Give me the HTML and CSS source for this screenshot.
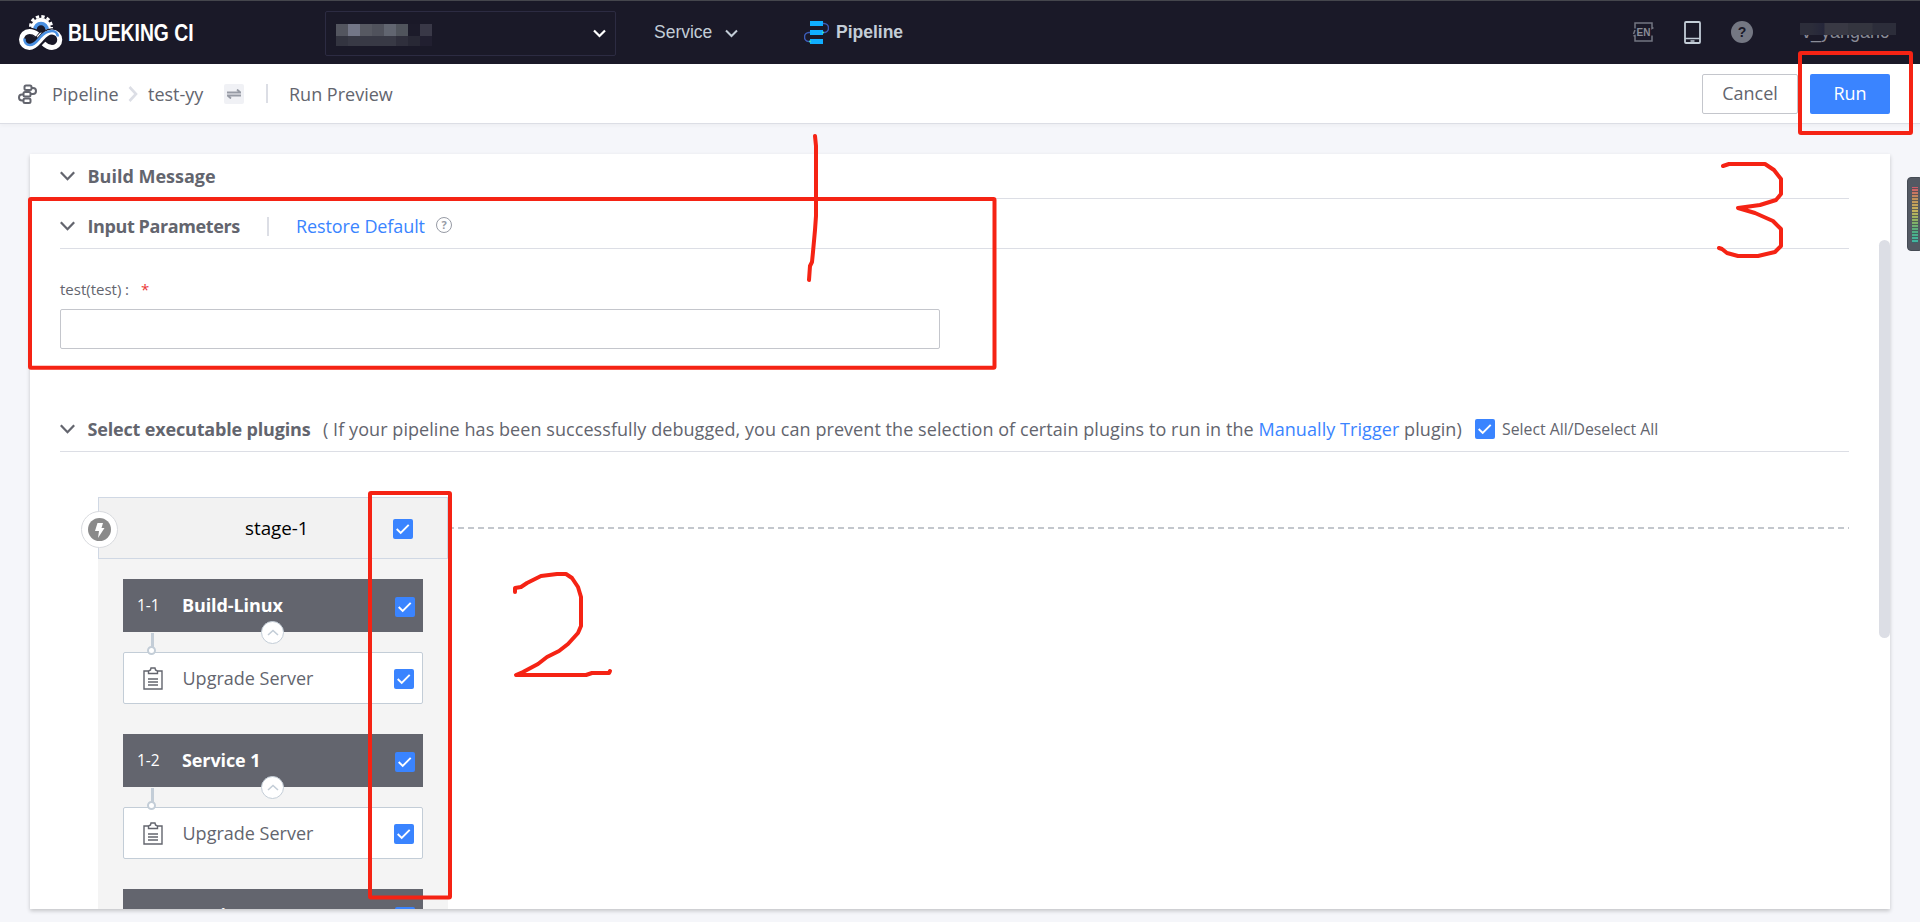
FILE: index.html
```html
<!DOCTYPE html>
<html lang="en">
<head>
<meta charset="utf-8">
<title>Run Preview</title>
<link rel="stylesheet" href="styles.css">
</head>
<body>
<svg class="defs" width="0" height="0">
  <symbol id="check" viewBox="0 0 20 20"><rect width="20" height="20" rx="2" fill="#3a84ff"/><path d="M3.700 10l4 4 8-8.200" fill="none" stroke="#fff" stroke-width="1.900"/></symbol>
  <symbol id="chevron" viewBox="0 0 15 10"><path d="M.8 1.200l6.700 7 6.700-7" fill="none" stroke="currentColor" stroke-width="2.300"/></symbol>
  <symbol id="clip" viewBox="0 0 20 23"><path d="M5 4H1v18h18V4h-4M5.500 6.500V4l2-1L8 1h4l.5 2 2 1v2.500z" fill="none" stroke="#63656e" stroke-width="1.400"/><path d="M5 12h10M5 15h10M5 18h10" stroke="#63656e" stroke-width="1.400"/></symbol>
</svg>
<header class="topbar">
  <div class="brand">
    <svg width="44" height="36" viewBox="0 0 44 36">
      <circle cx="22" cy="12" r="10.500" fill="none" stroke="#fff" stroke-width="3" stroke-dasharray="3.300 2.200"/>
      <circle cx="22" cy="12.500" r="7.500" fill="none" stroke="#fff" stroke-width="4.500"/>
      <path d="M16 14.500a6 6 0 0 1 12 0" fill="none" stroke="#4a90e2" stroke-width="3.600"/>
      <path d="M19 20c-2.500-2.500-5-3.500-8.500-3.500a8 8 0 0 0 0 16c5 0 7.500-3.800 10.800-7.500 3.200-3.700 6-8 11.700-8a7.700 7.700 0 0 1 0 15.500c-3 0-6-1.500-8.500-4" fill="none" stroke="#1a1928" stroke-width="7.500"/>
      <path d="M18.500 19.500c-2.500-2-5-3-8-3a8 8 0 0 0 0 16c5 0 7.500-3.800 10.800-7.500 3.200-3.700 6-8 11.700-8a7.700 7.700 0 0 1 0 15.500c-3 0-6-1.500-8.500-4" fill="none" stroke="#fff" stroke-width="5"/>
      <path d="M5.500 23.500c-.5 4 2 6.500 5.500 6.500 4.500 0 7-4 10-7.500s6.500-6.500 12-6.500c3 0 5.500 2 5.800 5.500" fill="none" stroke="#4a90e2" stroke-width="2.600"/>
    </svg>
    <span class="brand-name"><span class="t-brand">BLUEKING CI</span></span>
  </div>
  <div class="project">
    <div class="mosaic">
      <i class="m1"></i><i class="m2"></i><i class="m3"></i><i class="m4"></i><i class="m5"></i><i class="m6"></i><i class="m7"></i><i class="m8"></i>
      <i class="n1"></i><i class="n2"></i><i class="n2"></i><i class="n2"></i><i class="n2"></i><i class="n3"></i><i class="n4"></i><i class="n5"></i>
    </div>
    <svg width="13" height="9" viewBox="0 0 13 9"><path d="M1 1.500l5.500 5.500L12 1.500" fill="none" stroke="#fff" stroke-width="2.200"/></svg>
  </div>
  <div class="service"><span>Service</span><svg width="13" height="9" viewBox="0 0 13 9"><path d="M1 1.500l5.500 5.500L12 1.500" fill="none" stroke="#c3cdd7" stroke-width="2"/></svg></div>
  <div class="current">
    <svg width="25" height="25" viewBox="0 0 25 25"><path d="M18 3.500h2a4.200 4.200 0 0 1 0 9h-2M7 12.500H5a4.200 4.200 0 0 0 0 9h2" fill="none" stroke="#3b5cb8" stroke-width="1.500"/><path d="M6 1h13v5H6zM6 10h13v5H6zM6 19h13v5H6z" fill="#10aeff"/><circle cx="19" cy="12.500" r="1" fill="#42e6b5"/><circle cx="6" cy="21.500" r="1" fill="#42e6b5"/></svg>
    <span>Pipeline</span>
  </div>
  <div class="tools">
    <svg width="22" height="20" viewBox="0 0 22 20"><path d="M3 6.500V1h17v5.500l1.500-.8M20 13.500V19H3v-5.500l-1.500.5M1.500 12L3 8" fill="none" stroke="#737581" stroke-width="1.500"/><text x="11.500" y="13.800" text-anchor="middle" class="en">EN</text></svg>
    <svg class="phone" width="17" height="23" viewBox="0 0 17 23"><rect x="1" y="1" width="15" height="21" rx="1" fill="none" stroke="#c3cdd7" stroke-width="1.800"/><path d="M1 17.500h15M6.500 20h4" stroke="#c3cdd7" stroke-width="1.500"/></svg>
    <span class="help">?</span>
    <div class="user"><span>v_yangaric</span><b></b></div>
  </div>
</header>
<nav class="crumbs">
  <svg width="19" height="20" viewBox="0 0 19 20"><g fill="none" stroke="#63656e" stroke-width="2"><rect x="6.500" y="1.500" width="7" height="4.500" rx="1.500"/><rect x="5.500" y="8" width="7" height="4.500" rx="1.500"/><rect x="5.500" y="14.500" width="7" height="4.500" rx="1.500"/><path d="M13.500 4h1.500a3 3 0 0 1 0 6h-2.500M5.500 10.500H4a3 3 0 0 0 0 6h1.500"/></g></svg>
  <span class="c1">Pipeline</span>
  <svg class="sep" width="10" height="16" viewBox="0 0 10 16"><path d="M1.500 1l6.500 7-6.500 7" fill="none" stroke="#dcdee5" stroke-width="2.600"/></svg>
  <span class="c2">test-yy</span>
  <span class="swap"><svg width="14" height="10" viewBox="0 0 14 10"><path d="M0 3.500h13.500L10 .5M14 6.500H.5L4 9.500" fill="none" stroke="#979ba5" stroke-width="1.800"/></svg></span>
  <i class="bar"></i>
  <span class="c3">Run Preview</span>
  <div class="actions"><button class="cancel">Cancel</button><button class="run">Run</button></div>
</nav>
<main class="panel">
  <section class="head h-build"><svg class="chev"><use href="#chevron"/></svg><h2 class="t-build">Build Message</h2></section>
  <section class="head h-input"><svg class="chev"><use href="#chevron"/></svg><h2 class="t-input">Input Parameters</h2><i class="bar"></i><a class="t-restore">Restore Default</a><span class="tip">?</span></section>
  <div class="field"><label><span class="t-label">test(test)</span><span class="colon">:</span><em>*</em></label><input type="text"></div>
  <section class="head h-select"><svg class="chev"><use href="#chevron"/></svg><h2 class="t-select">Select executable plugins</h2>
    <p class="t-hint">( If your pipeline has been successfully debugged, you can prevent the selection of certain plugins to run in the <a>Manually Trigger</a> plugin)</p>
    <svg class="ck"><use href="#check"/></svg><span class="t-all">Select All/Deselect All</span></section>
  <div class="flow">
    <div class="stage">
      <div class="stage-head"><span class="t-stage">stage-1</span><svg class="ck"><use href="#check"/></svg>
        <span class="trigger"><svg width="23" height="23" viewBox="0 0 23 23"><circle cx="11.500" cy="11.500" r="11.500" fill="#8a8a8a"/><path d="M9.500 5h5.500l-1.500 5h3L10 20l1-7H7z" fill="#fff"/></svg></span>
      </div>
      <div class="job">
        <div class="job-head"><span class="no">1-1</span><b class="t-job">Build-Linux</b><svg class="ck"><use href="#check"/></svg><span class="fold"><svg width="12" height="7"><path d="M1 6l5-4.500L11 6" fill="none" stroke="#c3cdd7" stroke-width="1.600"/></svg></span></div>
        <div class="task"><svg class="clip" width="20" height="23"><use href="#clip"/></svg><span class="t-task">Upgrade Server</span><svg class="ck"><use href="#check"/></svg><i class="stem"></i><i class="dot"></i></div>
      </div>
      <div class="job">
        <div class="job-head"><span class="no">1-2</span><b class="t-job">Service 1</b><svg class="ck"><use href="#check"/></svg><span class="fold"><svg width="12" height="7"><path d="M1 6l5-4.500L11 6" fill="none" stroke="#c3cdd7" stroke-width="1.600"/></svg></span></div>
        <div class="task"><svg class="clip" width="20" height="23"><use href="#clip"/></svg><span class="t-task">Upgrade Server</span><svg class="ck"><use href="#check"/></svg><i class="stem"></i><i class="dot"></i></div>
      </div>
      <div class="job">
        <div class="job-head"><span class="no"></span><b class="t-job">Service 2</b><svg class="ck"><use href="#check"/></svg></div>
      </div>
    </div>
    <i class="dash"></i>
  </div>
  <i class="scroll"></i>
</main>
<aside class="meter"><i></i></aside>
<svg class="marks" width="1920" height="922" viewBox="0 0 1920 922">
  <g fill="none" stroke="#f52314" stroke-width="4" stroke-linejoin="round" stroke-linecap="round">
    <rect x="30" y="199" width="964.500" height="168.700" rx="1"/>
    <rect x="370" y="493" width="80" height="404.500" rx="1"/>
    <rect x="1800" y="53" width="111" height="80" rx="1"/>
    <path d="M815 136l1 10v70l-1 14-2 22-1 10-2 4-1 14"/>
    <path d="M515 592v-4l6-1 6-4 14-7 16-2h9l6 4 6 9 3 10v29l-3 7-10 11-9 7-12 6-9 7-15 8-7 3h70l6-2h17l1-2"/>
    <path d="M1723 166l6-2h36l9 6 7 9v15l-5 6-16 5-22 3 17 5 18 8 8 8v17l-6 6-17 4h-20l-11-3-5-4-3-1"/>
  </g>
</svg>
</body>
</html>
```
FILE: styles.css
```css
* { box-sizing: border-box; }
body { margin: 0; width: 1920px; height: 922px; overflow: hidden; background: #f5f6fa; font: 18px/24px "Open Sans", "Noto Sans", sans-serif; color: #63656e; display: flex; flex-direction: column; }
.defs { position: absolute; }
span, h2, p, a, b { white-space: nowrap; }
svg { flex: none; display: block; }
.ck { width: 20px; height: 20px; flex: none; }

.topbar { height: 64px; flex: none; background: #1a1928; border-top: 1px solid #45464d; display: flex; align-items: center; font-family: "Liberation Sans", Arial, sans-serif; color: #c3cdd7; }
.brand { width: 325px; padding-left: 19px; display: flex; align-items: center; gap: 5px; }
.brand-name { display: block; width: 130px; padding-top: 1px; font-weight: bold; font-size: 24px; color: #fff; }
.t-brand { display: inline-block; transform: scaleX(.805); transform-origin: left; }
.project { width: 291px; height: 45px; margin-top: 1px; border: 1px solid #2c2b42; border-radius: 2px; display: flex; align-items: center; justify-content: space-between; padding: 0 9px 0 10px; }
.mosaic { display: grid; grid-template-columns: repeat(8, 12px); grid-template-rows: 12px 10px; margin-top: 4px; }
.m1 { background: #53555f; } .m2 { background: #737687; } .m3 { background: #575962; } .m4 { background: #50525c; }
.m5 { background: #616570; } .m6 { background: #50545c; } .m7 { background: #1c1b2a; } .m8 { background: #393847; }
.n1 { background: #333440; } .n2 { background: #383945; } .n3 { background: #2f2f3c; } .n4 { background: #282835; } .n5 { background: #211f30; }
.service { margin-left: 38px; width: 150px; display: flex; align-items: center; gap: 13px; font-size: 17.5px; }
.service span, .current span { margin-top: -2px; }
.service svg { margin-top: 2px; }
.current { display: flex; align-items: center; gap: 7px; font-size: 17.5px; font-weight: bold; }
.tools { margin: -1px 0 0 auto; display: flex; align-items: center; padding-right: 24px; }
.en { font: bold 10px "Liberation Sans", sans-serif; fill: #8a8c97; }
.phone { margin-left: 30px; }
.help { margin-left: 30px; width: 22px; height: 22px; border-radius: 50%; background: #747783; color: #1a1928; font: bold 14px/22px "Liberation Sans", sans-serif; text-align: center; }
.user { margin-left: 47px; width: 96px; height: 24px; position: relative; color: #8a8c97; font-size: 18px; padding-left: 2px; }
.user b { position: absolute; left: 0; top: 3px; width: 96px; height: 12px; background: linear-gradient(90deg, #2c2d3a 0 12%, #25263a 25%, #393944 26% 50%, #34353f 50% 75%, #2c2d3a 76%); }

.crumbs { height: 60px; flex: none; background: #fff; border-bottom: 1px solid #dcdee5; display: flex; align-items: center; padding: 0 30px 0 18px; box-shadow: 0 2px 4px rgba(0,0,0,.03); }
.c1 { width: 67px; margin-left: 15px; }
.sep { margin-left: 9px; }
.c2 { width: 56px; margin-left: 10px; }
.swap { margin-left: 20px; width: 20px; height: 20px; background: #f0f1f5; border-radius: 2px; display: grid; place-items: center; }
.bar { width: 2px; height: 19px; background: #dcdee5; flex: none; }
.crumbs .bar { margin-left: 22px; }
.c3 { margin-left: 21px; }
.actions { margin-left: auto; display: flex; gap: 12px; }
button { height: 40px; font: inherit; border-radius: 2px; padding: 0 0 2px; }
.cancel { width: 96px; border: 1px solid #c4c6cc; background: #fff; color: #63656e; }
.run { width: 80px; border: 0; background: #3a84ff; color: #fff; }

.panel { position: relative; margin: 30px 30px 0; height: 755px; background: #fff; overflow: hidden; padding: 0 41px 0 30px; box-shadow: 0 2px 4px rgba(0,0,0,.2); }
.head { display: flex; align-items: center; border-bottom: 1px solid #dcdee5; }
.h-build { height: 45px; }
.h-input { height: 50px; padding-top: 5px; }
.h-select { height: 42px; padding-bottom: 3px; }
.chev { width: 15px; height: 10px; margin-right: 12.500px; }
h2 { margin: 0; font-size: 18px; line-height: 24px; font-weight: 700; }
.t-build { letter-spacing: 0; }
.t-input { width: 152px; letter-spacing: -.4px; }
.h-input .bar { margin-left: 27.500px; margin-right: 27px; }
a { color: #3a84ff; }
.t-restore { width: 129px; letter-spacing: -.1px; }
.tip { margin: -2px 0 0 11px; width: 16px; height: 16px; border: 1px solid #979ba5; border-radius: 50%; font-size: 11px; line-height: 14px; text-align: center; font-weight: bold; color: #979ba5; }
.field { height: 161px; padding-top: 28px; }
label { display: flex; height: 24px; margin-bottom: 8px; font-size: 15px; }
.t-label { width: 63px; }
.colon { width: 18px; padding-left: 2px; }
em { color: #ea3636; font-style: normal; }
input { display: block; width: 880px; height: 40px; border: 1px solid #c4c6cc; border-radius: 2px; }
.t-select { width: 224px; letter-spacing: -.17px; }
p { margin: 0 0 0 11.500px; width: 1140px; letter-spacing: .065px; }
.h-select .ck { margin-left: 12px; }
.t-all { margin-left: 7px; font-size: 15.800px; }
.flow { padding: 45px 0 0 38px; display: flex; }
.stage { width: 350px; height: 420px; background: #f4f4f4; flex: none; }
.stage-head { position: relative; height: 62px; border: 1px solid #d0d8e4; background: #f2f2f2; display: flex; align-items: center; color: #000; margin-bottom: 20px; padding-left: 146px; font-size: 18.800px; }
.stage-head .ck { position: absolute; left: 294px; top: 21px; }
.trigger { position: absolute; left: -18px; top: 13px; width: 37px; height: 37px; border: 1px solid #d8dade; border-radius: 50%; background: #fff; display: grid; place-items: center; }
.job { width: 300px; margin: 0 0 30px 25px; }
.job-head { position: relative; height: 53px; background: #63656e; color: #fff; display: flex; align-items: center; padding-left: 14px; margin-bottom: 20px; }
.no { width: 45px; font-size: 15.500px; margin-top: -1px; }
.t-job { letter-spacing: -.1px; margin-top: -2px; }
.job-head .ck { margin: 3px 8px 0 auto; }
.fold { position: absolute; left: 138px; top: 42px; width: 23px; height: 23px; background: #fff; border: 1.5px solid #c3cdd7; border-radius: 50%; display: grid; place-items: center; }
.task { position: relative; height: 52px; background: #fff; border: 1px solid #c3cdd7; border-radius: 2px; display: flex; align-items: center; padding: 0 8px 0 19px; }
.clip { margin-right: 19.500px; }
.task .ck { margin-left: auto; margin-top: 1px; }
.stem { position: absolute; left: 27px; top: -20px; width: 3px; height: 15px; background: #c3cdd7; }
.dot { position: absolute; left: 23px; top: -7px; width: 9px; height: 9px; border: 2px solid #c3cdd7; border-radius: 50%; background: #fff; }
.dash { flex: 1; margin-top: 30px; height: 2px; background: repeating-linear-gradient(90deg, #c3c7cd 0 6px, transparent 6px 10px); }
.scroll { position: absolute; right: 0; top: 86px; width: 11px; height: 398px; border-radius: 6px; background: #dcdee5; }
.meter { position: absolute; left: 1907px; top: 177px; width: 16px; height: 74px; background: #535963; border: 1px solid #454b54; border-radius: 4px; }
.meter i { position: absolute; left: 4px; top: 9px; width: 6px; height: 56px; background: repeating-linear-gradient(0deg, rgba(60,66,76,.7) 0 1px, transparent 1px 3px), linear-gradient(#cf5a6b, #c0905b 20%, #c5b35c 42%, #8db363 60%, #4fae83 80%, #3fb5a5); }
.marks { position: absolute; left: 0; top: 0; pointer-events: none; }
```
